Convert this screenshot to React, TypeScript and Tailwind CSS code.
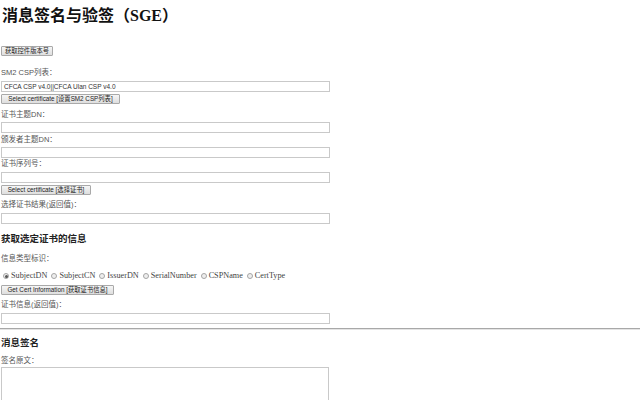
import React from 'react'

const cjk = "'Liberation Sans', 'Noto Sans CJK SC', sans-serif"
const serif = "'Liberation Serif', 'Noto Sans CJK SC', serif"

function Label({ children, className = '' }: { children: React.ReactNode; className?: string }) {
  return (
    <div className={`h-[10px] text-[7.5px] leading-[10px] text-[#555] pl-[1px] ${className}`} style={{ fontFamily: cjk }}>
      {children}
    </div>
  )
}

function Field({ value = '', className = '' }: { value?: string; className?: string }) {
  return (
    <div
      className={`w-[329px] h-[11px] ml-[1px] border border-[#c9c9c9] bg-white text-[6.5px] leading-[9px] pl-[2px] text-[#333] ${className}`}
      style={{ fontFamily: cjk }}
    >
      {value}
    </div>
  )
}

function Btn({ children, w, className = '' }: { children: React.ReactNode; w: string; className?: string }) {
  return (
    <div
      className={`${w} h-[10px] ml-[1px] border border-[#a9a9a9] rounded-[1px] bg-gradient-to-b from-[#f6f6f6] to-[#dedede] text-[6.3px] leading-[8px] text-[#222] text-center whitespace-nowrap ${className}`}
      style={{ fontFamily: cjk }}
    >
      {children}
    </div>
  )
}

function Radio({ label, checked = false }: { label: string; checked?: boolean }) {
  return (
    <div className="flex items-center gap-[2px] mr-[4px]">
      <span className="w-[6px] h-[6px] rounded-full border border-[#a5a5a5] bg-[#eee] flex items-center justify-center">
        {checked && <span className="w-[3px] h-[3px] rounded-full bg-[#555]" />}
      </span>
      <span className="text-[8.2px] leading-[10px] text-[#444]" style={{ fontFamily: serif }}>{label}</span>
    </div>
  )
}

export default function App() {
  const types = ['SubjectDN', 'SubjectCN', 'IssuerDN', 'SerialNumber', 'CSPName', 'CertType']
  return (
    <div className="w-[640px] h-[400px] overflow-hidden bg-white">
      <h1 className="pt-[6px] h-[26px] pl-[2px] text-[16px] leading-[20px] font-bold text-[#111]" style={{ fontFamily: serif }}>
        消息签名与验签（SGE）
      </h1>

      <Btn w="w-[52px]" className="mt-[20px]">获取控件版本号</Btn>

      <Label className="mt-[12px]">SM2 CSP列表：</Label>
      <Field value="CFCA CSP v4.0||CFCA Ulan CSP v4.0" className="mt-[3px]" />
      <Btn w="w-[119px]" className="mt-[2px]">Select certificate [设置SM2 CSP列表]</Btn>

      <Label className="mt-[6px]">证书主题DN：</Label>
      <Field className="mt-[2px]" />
      <Label className="mt-[2px]">颁发者主题DN：</Label>
      <Field className="mt-[2px]" />
      <Label className="mt-[1px]">证书序列号：</Label>
      <Field className="mt-[3px]" />
      <Btn w="w-[90px]" className="mt-[2px]">Select certificate [选择证书]</Btn>
      <Label className="mt-[5px]">选择证书结果(返回值)：</Label>
      <Field className="mt-[3px]" />

      <h3 className="mt-[9px] h-[12px] pl-[1px] text-[9.5px] leading-[12px] font-bold text-[#222]" style={{ fontFamily: serif }}>
        获取选定证书的信息
      </h3>

      <Label className="mt-[9px]">信息类型标识：</Label>
      <div className="mt-[7px] h-[10px] pl-[3px] flex items-center">
        {types.map((t, i) => (
          <Radio key={t} label={t} checked={i === 0} />
        ))}
      </div>
      <Btn w="w-[113px]" className="mt-[4px]">Get Cert Information [获取证书信息]</Btn>
      <Label className="mt-[5px]">证书信息(返回值)：</Label>
      <Field className="mt-[3px]" />

      <div className="mt-[4px] h-[2px] border-t border-[#a8a8a8] border-b border-b-[#e4e4e4]" />

      <h3 className="mt-[7px] h-[12px] pl-[1px] text-[9.5px] leading-[12px] font-bold text-[#222]" style={{ fontFamily: serif }}>
        消息签名
      </h3>
      <Label className="mt-[7px]">签名原文：</Label>
      <div className="mt-[1px] w-[328px] h-[60px] ml-[1px] border border-[#c9c9c9] bg-white" />
    </div>
  )
}
